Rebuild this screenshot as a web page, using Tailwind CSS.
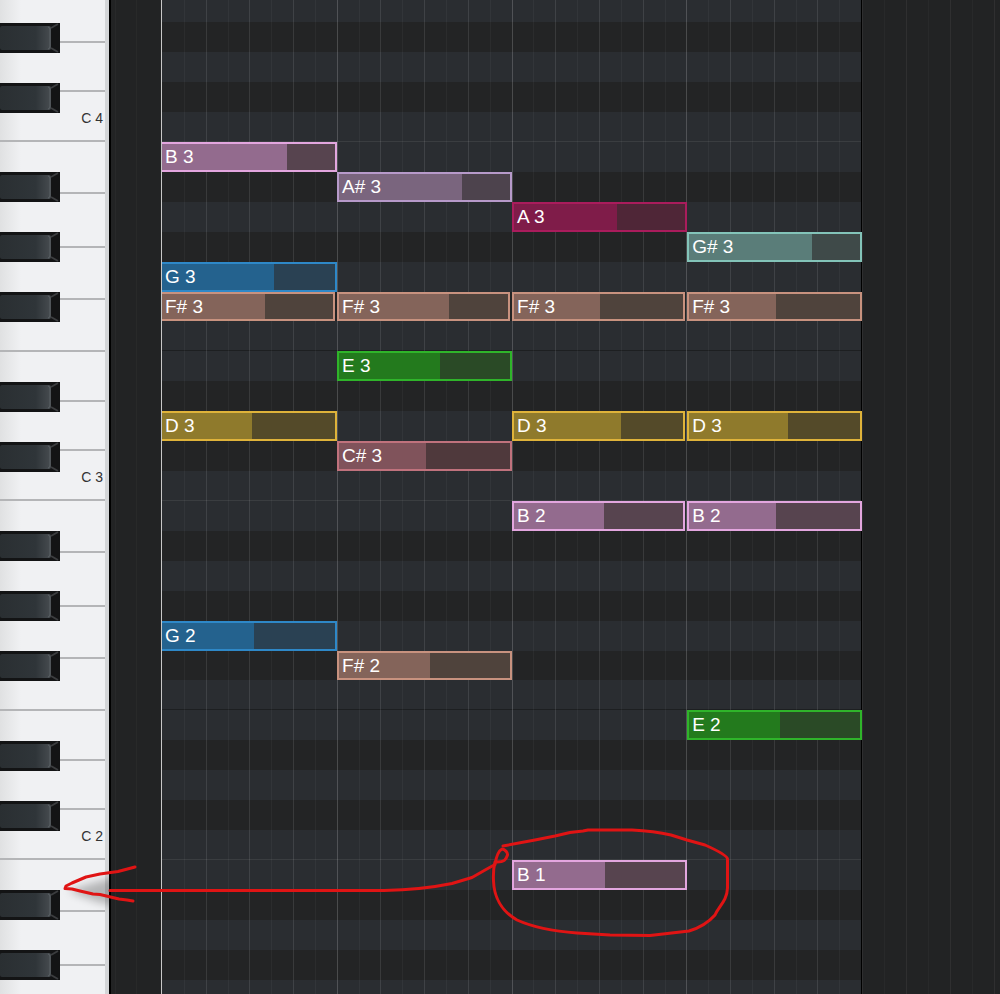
<!DOCTYPE html>
<html lang="en">

<head>
  <meta charset="UTF-8">
  <meta name="viewport" content="width=device-width, initial-scale=1.0">
  <title>Piano Roll</title>
  <script src="https://cdn.jsdelivr.net/npm/@tailwindcss/browser@4"></script>
</head>

<body class="bg-[#222324] h-screen overflow-hidden font-['Liberation_Sans',Arial,sans-serif]">
  <div class="relative flex h-full overflow-hidden">

    <!-- Keyboard -->
    <div id="keyboard" class="w-[111px] shrink-0 flex flex-col border-r-2 border-black"></div>

    <!-- Area before the clip -->
    <div class="w-[50px] shrink-0 flex justify-between pl-1 pr-6">
      <div class="w-px bg-[#28292a]"></div>
      <div class="w-px bg-[#282929]"></div>
    </div>

    <!-- Clip: stripes, beat lines and notes are stacked in one grid cell -->
    <main class="flex-[701] grid border-l border-[#c8c8c8] h-full overflow-hidden">
      <div id="stripes" class="[grid-area:1/1] flex flex-col"></div>
      <div id="lines" class="[grid-area:1/1] grid grid-cols-32 border-r border-black"></div>
      <div id="notes" class="[grid-area:1/1] flex flex-col"></div>
    </main>

    <!-- Area after the clip -->
    <div id="tail" class="flex-[138] flex overflow-hidden"></div>

    <!-- Hand drawn marks -->
    <svg class="absolute left-0 top-0 w-[1000px] h-[994px] pointer-events-none" viewBox="0 0 1000 994" fill="none">
      <defs>
        <filter id="soft" x="-50%" y="-50%" width="200%" height="200%"><feGaussianBlur stdDeviation="4" /></filter>
        <clipPath id="keys"><rect x="60" y="860" width="49" height="60" /></clipPath>
      </defs>
      <g clip-path="url(#keys)">
        <path d="M68 891 L90 884 L125 874 V908 L98 902 Z" fill="#000" opacity=".25" filter="url(#soft)" />
      </g>
      <g stroke="#e01414" stroke-width="3" stroke-linecap="round" stroke-linejoin="round">
        <path d="M135 867 L118 871.500 L100 874 L86 877 L72 883 L66 886 L65 888.500 L72 889 L80 891 L93 894 L100 894.500 L119 899 L127 900 L133 901" />
        <path d="M110 890.500 H384 C410 890 435 887 452 883.500 L472 877.500 L486 869.500 L495 864.500 C496 858 498 851 502 849 C505 849 508 853 507.500 855 C506 860 504 862 497 862" />
        <path d="M503 846 L535 840 L555 836 L570 832.500 L583 831 L588 830 H632 C650 831 662 833 671 835 L687 840 L705 845 C714 849 727 855 727.500 859 V888 C727 901 719 906 715 915 C708 923 699 928 689 931 L650 935.500 L610 935 L577 933 C550 931 528 925 517 920 C501 911 494 896 493.500 881 C493 872 494 866 495 862" />
      </g>
    </svg>
  </div>

  <script>
    const PITCHES = ['B', 'A#', 'A', 'G#', 'G', 'F#', 'F', 'E', 'D#', 'D', 'C#', 'C'];
    const OCTAVES = [4, 3, 2, 1];

    // one octave is 359px, the top one only shows its lower end
    const octaveClass = o => o === 4 ? 'h-[142px] shrink-0 flex flex-col justify-end overflow-hidden' : 'h-[359px] shrink-0';

    const whiteKeys = [
      ['B', 'h-[52px]'], ['A', 'h-[54px]'], ['G', 'h-[52px]'], ['F', 'h-[52px]'],
      ['E', 'h-[50px]'], ['D', 'h-[49px]'], ['C', 'h-[50px]']
    ];

    const colors = {
      'B': ['border-[#e3a6df]', 'bg-[#57444f]', 'bg-[#936b8e]'],
      'A#': ['border-[#b79aca]', 'bg-[#4d434d]', 'bg-[#7a657e]'],
      'A': ['border-[#aa1c5c]', 'bg-[#4f2637]', 'bg-[#7f1c49]'],
      'G#': ['border-[#83c4b9]', 'bg-[#3f4a49]', 'bg-[#5a7d79]'],
      'G': ['border-[#2e88c8]', 'bg-[#2a4153]', 'bg-[#24628e]'],
      'F#': ['border-[#c8927f]', 'bg-[#4f433c]', 'bg-[#84645a]'],
      'E': ['border-[#2fb42a]', 'bg-[#2a4a26]', 'bg-[#237a1d]'],
      'D': ['border-[#dfb33a]', 'bg-[#544a29]', 'bg-[#8f7a2c]'],
      'C#': ['border-[#c0727d]', 'bg-[#4f393c]', 'bg-[#80535b]']
    };

    // octave, pitch, beat, velocity in percent, gap before the next note
    const notes = [
      [3, 'B', 1, 72], [3, 'A#', 2, 72], [3, 'A', 3, 60], [3, 'G#', 4, 72],
      [3, 'G', 1, 65],
      [3, 'F#', 1, 60, true], [3, 'F#', 2, 65, true], [3, 'F#', 3, 51, true], [3, 'F#', 4, 51],
      [3, 'E', 2, 59],
      [3, 'D', 1, 52], [3, 'D', 3, 63, true], [3, 'D', 4, 58],
      [3, 'C#', 2, 51],
      [2, 'B', 3, 53, true], [2, 'B', 4, 51],
      [2, 'G', 1, 53], [2, 'F#', 2, 53], [2, 'E', 4, 53],
      [1, 'B', 3, 53]
    ];

    const rowStarts = ['row-start-1', 'row-start-2', 'row-start-3', 'row-start-4', 'row-start-5', 'row-start-6',
      'row-start-7', 'row-start-8', 'row-start-9', 'row-start-10', 'row-start-11', 'row-start-12'];
    const colStarts = ['col-start-1', 'col-start-2', 'col-start-3', 'col-start-4'];

    function stripe(pitch) {
      let cls = pitch.includes('#') ? 'bg-[#232425]' : 'bg-[#2a2d31]';
      if (pitch === 'C') cls += ' border-b border-[#3a3d40]';
      if (pitch === 'F') cls += ' border-b border-[#1d1f21]';
      return `<div class="${cls}"></div>`;
    }

    function whiteKey([name, height], octave) {
      const label = name === 'C' && octave > 1 ? `${name} ${octave}` : '';
      return `<button aria-label="${name} ${octave}" class="${height} w-full flex items-center justify-end pr-[2px] pt-1 border-b-2 border-[#b4b5b7] bg-linear-to-r from-[#e0e1e2] via-[#f0f1f3] via-20% to-[#f0f1f3] text-[14px] text-[#333]">${label}</button>`;
    }

    function blackKey(pitch, octave, i) {
      return `<button aria-label="${pitch} ${octave}" class="${rowStarts[i]} pointer-events-auto w-[60px] flex bg-[#111213]">
        <svg class="w-[60px] h-full" viewBox="0 0 60 30" preserveAspectRatio="none">
          <rect width="60" height="30" fill="#131415" />
          <rect y="3" width="51" height="24" rx="2" fill="url(#keyTop)" />
          <path d="M48 4 Q50 4 50 7 V23 Q50 26 48 26" fill="none" stroke="#5a6064" />
          <path d="M51 5 L58 1 M51 25 L58 29" stroke="#3b3d3f" stroke-width="2" />
        </svg>
      </button>`;
    }

    function octaveKeys(octave) {
      const blacks = PITCHES.map((p, i) => p.includes('#') ? blackKey(p, octave, i) : '').join('');
      return `<div class="${octaveClass(octave)}">
        <div class="grid h-[359px] shrink-0">
          <div class="[grid-area:1/1] border-r-4 border-[#d3d5d7]">${whiteKeys.map(k => whiteKey(k, octave)).join('')}</div>
          <div class="[grid-area:1/1] grid grid-rows-12 pointer-events-none z-10">${blacks}</div>
        </div>
      </div>`;
    }

    function note([octave, pitch, beat, velocity, gap]) {
      const [border, rest, fill] = colors[pitch];
      const row = rowStarts[PITCHES.indexOf(pitch)];
      const left = beat === 1 ? 'border-l-0' : '';
      return `<button class="${row} ${colStarts[beat - 1]} ${border} ${rest} ${left} ${gap ? 'mr-[2px]' : ''} relative border-2 text-left text-white text-[19px] leading-[26px] pl-[3px] min-h-0">
        <span class="${fill} absolute inset-y-0 left-0" style="width:${velocity}%"></span>
        <span class="relative">${pitch} ${octave}</span>
      </button>`;
    }

    document.getElementById('keyboard').innerHTML =
      `<svg class="absolute size-0"><defs><linearGradient id="keyTop">
        <stop offset="0" stop-color="#2a2f32" /><stop offset=".7" stop-color="#2f3539" /><stop offset="1" stop-color="#474c50" />
      </linearGradient></defs></svg>` + OCTAVES.map(octaveKeys).join('');

    document.getElementById('stripes').innerHTML = OCTAVES.map(o =>
      `<div class="${octaveClass(o)}"><div class="grid grid-rows-12 h-[359px] shrink-0">${PITCHES.map(stripe).join('')}</div></div>`
    ).join('');

    document.getElementById('lines').innerHTML = Array.from({ length: 32 }, (_, i) => {
      const tone = i % 8 === 0 ? 'border-white/18' : i % 2 === 0 ? 'border-white/10' : 'border-white/4';
      return `<div class="border-l ${i === 0 ? 'border-transparent' : tone}"></div>`;
    }).join('');

    document.getElementById('notes').innerHTML = OCTAVES.map(o =>
      `<div class="${octaveClass(o)}"><div class="grid grid-rows-12 grid-cols-4 h-[359px] shrink-0">${notes.filter(n => n[0] === o).map(note).join('')}</div></div>`
    ).join('');

    document.getElementById('tail').innerHTML = Array.from({ length: 7 }, (_, i) =>
      `<div class="w-[22px] shrink-0 border-l ${i % 2 === 0 ? 'border-white/6' : 'border-white/3'}"></div>`
    ).join('');
  </script>
</body>

</html>
